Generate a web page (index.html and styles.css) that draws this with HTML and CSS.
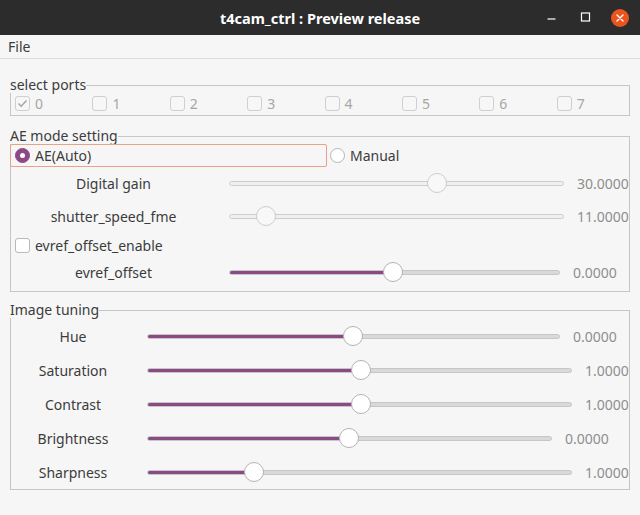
FILE: index.html
```html
<!DOCTYPE html>
<html lang="en">
<head>
    <meta charset="UTF-8">
    <meta name="viewport" content="width=device-width, initial-scale=1.0">
    <title>t4cam_ctrl : Preview release</title>
    <link rel="stylesheet" href="styles.css">
</head>
<body>
    <!-- Window title bar -->
    <div class="titlebar">
        <div></div>
        <div class="title">t4cam_ctrl : Preview release</div>
        <div class="wm-buttons">
            <span class="wm-btn">
                <svg width="20" height="20" viewBox="0 0 20 20"><line x1="5.5" y1="11" x2="13.5" y2="11" stroke="#fff" stroke-width="1.2"/></svg>
            </span>
            <span class="wm-btn">
                <svg width="20" height="20" viewBox="0 0 20 20"><rect x="5.5" y="5" width="8" height="8" fill="none" stroke="#fff" stroke-width="1.2"/></svg>
            </span>
            <span class="wm-btn">
                <svg width="20" height="20" viewBox="0 0 20 20">
                    <circle cx="10" cy="10" r="9" fill="#e9541f"/>
                    <path d="M7 7 L13 13 M13 7 L7 13" stroke="#fff" stroke-width="1.4" stroke-linecap="round"/>
                </svg>
            </span>
        </div>
    </div>

    <!-- Menu -->
    <div class="menubar">
        <span class="menu-item">File</span>
    </div>

    <div class="content">
        <!-- select ports -->
        <fieldset class="group">
            <legend>select ports</legend>
            <div class="ports">
                <label class="check disabled"><span class="box"><svg width="13" height="13" viewBox="0 0 13 13"><path d="M2.5 6.5 L5.2 9.2 L10.5 3.5" fill="none" stroke="#a3a3a3" stroke-width="1.4"/></svg></span>0</label>
                <label class="check disabled"><span class="box"></span>1</label>
                <label class="check disabled"><span class="box"></span>2</label>
                <label class="check disabled"><span class="box"></span>3</label>
                <label class="check disabled"><span class="box"></span>4</label>
                <label class="check disabled"><span class="box"></span>5</label>
                <label class="check disabled"><span class="box"></span>6</label>
                <label class="check disabled"><span class="box"></span>7</label>
            </div>
        </fieldset>

        <!-- AE mode -->
        <fieldset class="group group-ae">
            <legend>AE mode setting</legend>
            <div class="ae-grid">
                <div class="radio-row">
                    <label class="radio focused"><span class="dot checked"></span>AE(Auto)</label>
                    <label class="radio"><span class="dot"></span>Manual</label>
                </div>
                <div class="slider-row ae-row">
                    <span class="label">Digital gain</span>
                    <div class="slider disabled">
                        <div class="track"></div>
                        <div class="handle" style="left:62%"></div>
                    </div>
                    <span class="value w52">30.0000</span>
                </div>
                <div class="slider-row ae-row">
                    <span class="label">shutter_speed_fme</span>
                    <div class="slider disabled">
                        <div class="track"></div>
                        <div class="handle" style="left:11%"></div>
                    </div>
                    <span class="value w52">11.0000</span>
                </div>
                <div class="check-row">
                    <label class="check"><span class="box"></span>evref_offset_enable</label>
                </div>
                <div class="slider-row ae-row">
                    <span class="label">evref_offset</span>
                    <div class="slider">
                        <div class="track"><div class="fill" style="width:49.5%"></div></div>
                        <div class="handle" style="left:49.5%"></div>
                    </div>
                    <span class="value w56">0.0000</span>
                </div>
            </div>
        </fieldset>

        <!-- Image tuning -->
        <fieldset class="group group-tuning">
            <legend>Image tuning</legend>
            <div class="tuning-grid">
                <div class="slider-row tune-row">
                    <span class="label">Hue</span>
                    <div class="slider">
                        <div class="track"><div class="fill" style="width:49.9%"></div></div>
                        <div class="handle" style="left:49.9%"></div>
                    </div>
                    <span class="value w56">0.0000</span>
                </div>
                <div class="slider-row tune-row">
                    <span class="label">Saturation</span>
                    <div class="slider">
                        <div class="track"><div class="fill" style="width:50.4%"></div></div>
                        <div class="handle" style="left:50.4%"></div>
                    </div>
                    <span class="value w44">1.0000</span>
                </div>
                <div class="slider-row tune-row">
                    <span class="label">Contrast</span>
                    <div class="slider">
                        <div class="track"><div class="fill" style="width:50.4%"></div></div>
                        <div class="handle" style="left:50.4%"></div>
                    </div>
                    <span class="value w44">1.0000</span>
                </div>
                <div class="slider-row tune-row">
                    <span class="label">Brightness</span>
                    <div class="slider">
                        <div class="track"><div class="fill" style="width:49.9%"></div></div>
                        <div class="handle" style="left:49.9%"></div>
                    </div>
                    <span class="value w64">0.0000</span>
                </div>
                <div class="slider-row tune-row">
                    <span class="label">Sharpness</span>
                    <div class="slider">
                        <div class="track"><div class="fill" style="width:25.2%"></div></div>
                        <div class="handle" style="left:25.2%"></div>
                    </div>
                    <span class="value w44">1.0000</span>
                </div>
            </div>
        </fieldset>
    </div>
</body>
</html>
```

FILE: styles.css
```css
/* Base */
body {
    margin: 0;
    background-color: #f6f6f6;
    color: #3c3c3c;
    font-family: "Noto Sans", "DejaVu Sans", sans-serif;
    font-size: 14px;
}

/* Title bar */
.titlebar {
    height: 35px;
    background-color: #2c2c2c;
    display: grid;
    grid-template-columns: 1fr auto 1fr;
    align-items: center;
}

.title {
    color: #ffffff;
    font-weight: bold;
    font-size: 14.5px;
}

.wm-buttons {
    display: flex;
    justify-content: flex-end;
    gap: 14px;
    padding-right: 10px;
}

.wm-btn {
    width: 20px;
    height: 20px;
    display: block;
}

.wm-btn svg {
    display: block;
}

/* Menu bar */
.menubar {
    height: 23px;
    border-bottom: 1px solid #dcdcdc;
    display: flex;
    align-items: center;
    padding-left: 8px;
}

/* Content */
.content {
    padding: 0 10px;
}

.group {
    margin: 12px 0 0 0;
    padding: 0;
    border: 1px solid #c6c6c6;
    min-width: 0;
}

.group:first-child {
    margin-top: 18px;
}

.group-tuning {
    margin-top: 10px;
}

.group legend {
    padding: 0;
    margin-left: -1px;
    height: 16px;
    line-height: 16px;
    color: #3c3c3c;
}

/* Checkboxes */
.ports {
    display: grid;
    grid-template-columns: repeat(8, 77.4px);
    padding: 2px 0 4px 4px;
}

.check {
    display: flex;
    align-items: center;
    gap: 5px;
    height: 16px;
}

.check .box {
    width: 15px;
    height: 15px;
    box-sizing: border-box;
    border: 1px solid #b9b9b9;
    border-radius: 3px;
    background-color: #ffffff;
    display: flex;
    align-items: center;
    justify-content: center;
}

.check.disabled {
    color: #a6a6a6;
}

.check.disabled .box {
    border-color: #cfcfcf;
    background-color: #f7f7f7;
}

.check-row {
    display: flex;
    align-items: center;
    padding-left: 4px;
}

/* Radios */
.ae-grid {
    display: grid;
    grid-template-rows: 23px 32px 34px 24px 30px;
    padding-bottom: 4px;
}

.radio-row {
    display: grid;
    grid-template-columns: 317px 1fr;
    gap: 3px;
    margin-left: -1px;
}

.radio {
    display: flex;
    align-items: center;
    gap: 5px;
    padding-left: 4px;
}

.radio.focused {
    border: 1px solid #e9a287;
    border-radius: 2px;
}

.radio-row .radio:last-child {
    padding-left: 0;
}

.dot {
    width: 15px;
    height: 15px;
    box-sizing: border-box;
    border-radius: 50%;
    border: 1px solid #b5b5b5;
    background-color: #ffffff;
    position: relative;
}

.dot.checked {
    border-color: #8b4a86;
    background-color: #8b4a86;
}

.dot.checked::after {
    content: "";
    position: absolute;
    left: 4px;
    top: 4px;
    width: 5px;
    height: 5px;
    border-radius: 50%;
    background-color: #ffffff;
}

/* Slider rows */
.slider-row {
    display: flex;
    align-items: center;
}

.slider-row .label {
    text-align: center;
    flex-shrink: 0;
}

.ae-row .label {
    width: 205px;
    margin-right: 13px;
}

.tune-row .label {
    width: 124px;
    margin-right: 12px;
}

.slider {
    position: relative;
    flex: 1;
    height: 20px;
    display: flex;
    align-items: center;
}

.track {
    width: 100%;
    height: 5px;
    box-sizing: border-box;
    border: 1px solid #c6c6c6;
    border-radius: 3px;
    background-color: #d9d9d9;
    overflow: hidden;
}

.fill {
    height: 100%;
    background-color: #8b4a86;
    margin: -1px 0 0 -1px;
    padding-bottom: 2px;
}

.handle {
    position: absolute;
    top: 0;
    width: 20px;
    height: 20px;
    margin-left: -10px;
    box-sizing: border-box;
    border-radius: 50%;
    border: 1px solid #b3b3b3;
    background-color: #ffffff;
}

.slider.disabled .track {
    background-color: #f0f0f0;
    border-color: #cdcdcd;
}

.slider.disabled .handle {
    border-color: #cdcdcd;
    background-color: #f8f8f8;
}

.value {
    margin-left: 13px;
    color: #8e8e8e;
    flex-shrink: 0;
    white-space: nowrap;
}

.w44 { width: 44px; }
.w52 { width: 52px; }
.w56 { width: 56px; }
.w64 { width: 64px; }

.tuning-grid {
    display: grid;
    grid-auto-rows: 34px;
    padding-top: 1px;
}
```
